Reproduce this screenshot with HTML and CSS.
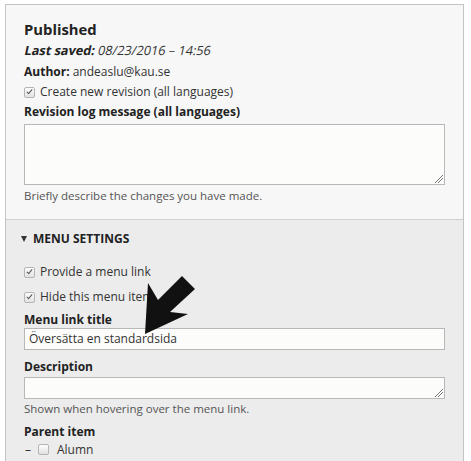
FILE: index.html
```html
<!DOCTYPE html>
<html>
<head>
<meta charset="utf-8">
<link rel="stylesheet" href="styles.css">
</head>
<body>
<div class="panel">
  <div class="meta">
    <h2 class="status">Published</h2>
    <div class="saved"><span class="oblique"><b>Last saved:</b> 08/23/2016 – 14:56</span></div>
    <div class="line"><b>Author:</b> andeaslu@kau.se</div>
    <div class="check"><span class="box on"></span>Create new revision (all languages)</div>
    <div class="label">Revision log message (all languages)</div>
    <div class="textarea tall"><span class="grip"></span></div>
    <div class="desc">Briefly describe the changes you have made.</div>
  </div>
  <div class="menu">
    <div class="summary"><span class="tri"></span>MENU SETTINGS</div>
    <div class="check first"><span class="box on"></span>Provide a menu link</div>
    <div class="check second"><span class="box on"></span>Hide this menu item</div>
    <div class="label l1">Menu link title</div>
    <div class="input">Översätta en standardsida</div>
    <div class="label l2">Description</div>
    <div class="textarea short"><span class="grip"></span></div>
    <div class="desc d2">Shown when hovering over the menu link.</div>
    <div class="label l3">Parent item</div>
    <div class="tree"><span class="dash">–</span><span class="box"></span>Alumn</div>
    <div class="tree"><span class="dash">–</span><span class="box"></span>Administrativ enhet</div>
  </div>
</div>
<svg class="arrow" width="471" height="461" viewBox="0 0 471 461">
  <polygon points="145,334 148,283 158,300 182,276 195,289 170,312 188,314" fill="#111"/>
</svg>
</body>
</html>
```
FILE: styles.css
```css
html, body {
  margin: 0;
  padding: 0;
  background: #fff;
  width: 471px;
  height: 461px;
  overflow: hidden;
}
body {
  font-family: "Open Sans", "DejaVu Sans", sans-serif;
  font-size: 12px;
  color: #333;
  position: relative;
}
.panel {
  margin: 4px 0 0 5px;
  width: 457px;
  border: 1px solid #c4c4c4;
  border-bottom: none;
}
.meta {
  background: #f7f7f7;
  padding: 14px 18px 13px 18px;
  border-bottom: 1px solid #cfcfcf;
}
.status {
  margin: 0 0 1px 0;
  font-size: 14.8px;
  line-height: 20px;
  font-weight: bold;
  color: #222;
}
.saved {
  line-height: 20px;
  margin-bottom: 2px;
  font-size: 12.7px;
}
.oblique {
  display: inline-block;
  transform: skewX(-12deg);
  transform-origin: 0 70%;
}
.saved b { color: #222; }
.line {
  line-height: 20px;
}
.line b { color: #222; }
.check {
  display: flex;
  align-items: center;
  line-height: 20px;
}
.box {
  display: inline-block;
  width: 9px;
  height: 9px;
  border: 1px solid #b5b5b5;
  border-radius: 2px;
  background: linear-gradient(#fdfdfd, #e2e2e2);
  margin-right: 5px;
  position: relative;
}
.box.on::after {
  content: "";
  position: absolute;
  left: 3px;
  top: 0px;
  width: 2px;
  height: 5px;
  border: solid #555;
  border-width: 0 1.5px 1.5px 0;
  transform: rotate(40deg);
}
.label {
  font-weight: bold;
  color: #222;
  line-height: 20px;
}
.textarea {
  box-sizing: border-box;
  width: 421px;
  border: 1px solid #b8b8b8;
  background: #fcfcfa;
  position: relative;
  margin-top: 2px;
}
.textarea.tall { height: 61px; }
.textarea.short { height: 22px; margin-top: 1px; }
.grip {
  position: absolute;
  right: 1px;
  bottom: 1px;
  width: 8px;
  height: 8px;
  background: linear-gradient(135deg, transparent 0 45%, #777 45% 52%, transparent 52% 68%, #777 68% 75%, transparent 75%);
}
.desc {
  font-size: 11.5px;
  color: #555;
  line-height: 20px;
  margin-top: 1px;
}
.menu {
  background: #ececec;
  padding: 9px 18px 0 18px;
  height: 240px;
}
.summary {
  display: flex;
  align-items: center;
  font-weight: bold;
  color: #222;
  line-height: 20px;
  margin-left: -3px;
}
.tri {
  width: 0;
  height: 0;
  border-left: 3.5px solid transparent;
  border-right: 3.5px solid transparent;
  border-top: 6px solid #333;
  margin-right: 6px;
}
.check.first { margin-top: 13px; }
.check.second { margin-top: 5px; }
.l1 { margin-top: 4px; line-height: 17px; }
.input {
  box-sizing: border-box;
  width: 421px;
  height: 22px;
  border: 1px solid #b8b8b8;
  background: #fcfcfa;
  padding: 0 4px;
  line-height: 20px;
}
.l2 { margin-top: 7px; line-height: 19px; }
.d2 { margin-top: 0; }
.l3 { margin-top: 4px; line-height: 18px; }
.tree {
  display: flex;
  align-items: center;
  line-height: 17px;
}
.dash {
  width: 13px;
  margin-left: 1px;
}
.tree .box { margin-right: 8px; }
.arrow {
  position: absolute;
  left: 0;
  top: 0;
  pointer-events: none;
}
```
